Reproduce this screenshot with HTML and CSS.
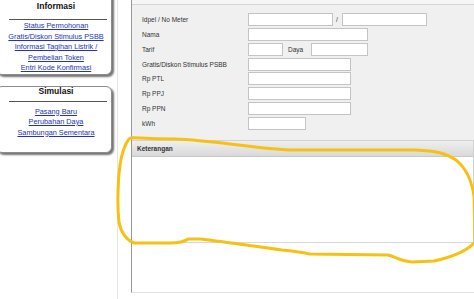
FILE: index.html
```html
<!DOCTYPE html>
<html lang="id">
<head>
    <meta charset="UTF-8">
    <meta name="viewport" content="width=device-width, initial-scale=1.0">
    <title>Informasi Pelanggan</title>
    <link rel="stylesheet" href="styles.css">
</head>
<body>
    <div class="page">
        <div class="sidebar">
            <div class="menu-box menu-info">
                <div class="menu-title">Informasi</div>
                <div class="menu-rule"></div>
                <div class="menu-links">
                    <a href="#">Status Permohonan</a>
                    <a href="#">Gratis/Diskon Stimulus PSBB</a>
                    <a href="#">Informasi Tagihan Listrik /<br>Pembelian Token</a>
                    <a href="#">Entri Kode Konfirmasi</a>
                </div>
            </div>

            <div class="menu-box menu-sim">
                <div class="menu-title">Simulasi</div>
                <div class="menu-rule"></div>
                <div class="menu-links">
                    <a href="#">Pasang Baru</a>
                    <a href="#">Perubahan Daya</a>
                    <a href="#">Sambungan Sementara</a>
                </div>
            </div>
        </div>

        <div class="main">
            <div class="panel">
                <div class="panel-top"></div>

                <div class="form">
                    <label>Idpel / No Meter</label>
                    <div class="field">
                        <input type="text" class="w85">
                        <span class="sep">/</span>
                        <input type="text" class="w85">
                    </div>

                    <label>Nama</label>
                    <div class="field"><input type="text" class="w120"></div>

                    <label>Tarif</label>
                    <div class="field">
                        <input type="text" class="w35">
                        <span class="daya">Daya</span>
                        <input type="text" class="w57">
                    </div>

                    <label>Gratis/Diskon Stimulus PSBB</label>
                    <div class="field"><input type="text" class="w103"></div>

                    <label>Rp PTL</label>
                    <div class="field"><input type="text" class="w103"></div>

                    <label>Rp PPJ</label>
                    <div class="field"><input type="text" class="w103"></div>

                    <label>Rp PPN</label>
                    <div class="field"><input type="text" class="w103"></div>

                    <label>kWh</label>
                    <div class="field"><input type="text" class="w58"></div>
                </div>

                <div class="ket">
                    <div class="ket-head">Keterangan</div>
                    <div class="ket-body"></div>
                </div>
            </div>
        </div>

        <!-- hand drawn marker loop around the Keterangan box -->
        <svg class="marker" width="474" height="299" viewBox="0 0 474 299">
            <path d="M129,139 C132,136 136,139 175,139 C212,140 250,148 290,150 L415,150
                     C436,151 446,153 456,160 C466,168 472,182 474,196 L475,242
                     C468,250 452,257 434,261 L412,262 C401,261 396,257 388,255
                     L310,254 C300,252 292,251 282,250 C250,246 220,241 200,239
                     L188,239 C184,242 180,243 170,243 L134,243
                     C127,240 121,233 119,222 C117,205 118,180 120,165
                     C122,152 125,144 129,139 Z" />
        </svg>
    </div>
</body>
</html>
```

FILE: styles.css
```css
* {
    margin: 0;
    padding: 0;
    box-sizing: border-box;
}

body {
    background-color: #ffffff;
    font-family: 'Liberation Sans', Arial, sans-serif;
    overflow: hidden;
}

.page {
    position: relative;
    display: flex;
    width: 474px;
    height: 299px;
    overflow: hidden;
}

/* sidebar menus */

.sidebar {
    width: 117px;
    flex-shrink: 0;
}

.menu-box {
    width: 116px;
    margin-left: -4px;
    padding-left: 4px;
    background-color: #ffffff;
    border: 1px solid #8c8c8c;
    border-radius: 6px;
    box-shadow: 2px 2px 2px rgba(0, 0, 0, 0.55);
    text-align: center;
}

.menu-info {
    margin-top: -11px;
    padding-top: 10px;
}

.menu-sim {
    margin-top: 11px;
    padding-bottom: 14px;
}

.menu-title {
    font-size: 8.5px;
    font-weight: bold;
    line-height: 12px;
    color: #111111;
}

.menu-info .menu-title {
    margin-bottom: 7px;
}

.menu-sim .menu-title {
    line-height: 9px;
    margin-bottom: 5px;
}

.menu-rule {
    height: 1px;
    margin: 0 4px 0 8px;
    background-color: #555555;
}

.menu-links {
    padding-top: 1px;
    font-size: 7.3px;
    line-height: 10.5px;
}

.menu-sim .menu-links {
    padding-top: 5px;
}

.menu-links a {
    display: block;
    color: #2233bb;
}

/* main panel */

.main {
    flex: 1;
    border-left: 1px solid #e6e6e6;
    padding-left: 13px;
}

.panel {
    height: 293px;
    border-left: 1px solid #999999;
    border-bottom: 1px solid #e2e2e2;
}

.panel-top {
    height: 5px;
    background-color: #f6f6f6;
    border-bottom: 1px solid #d6d6d6;
}

.form {
    display: grid;
    grid-template-columns: 106px auto;
    row-gap: 1.85px;
    align-items: center;
    padding: 8px 0 10px 10px;
    background-color: #f0f0f0;
    font-size: 6.5px;
    color: #333333;
}

.form label {
    line-height: 13px;
}

.field {
    display: flex;
    align-items: center;
    height: 13px;
}

.field input {
    height: 13px;
    border: 1px solid #c4c4c4;
    background-color: #ffffff;
}

.sep {
    width: 9px;
    padding-left: 3px;
}

.daya {
    width: 28px;
    padding-left: 5px;
}

.w35 { width: 35px; }
.w57 { width: 57px; }
.w58 { width: 58px; }
.w85 { width: 85px; }
.w103 { width: 103px; }
.w120 { width: 120px; }

/* keterangan box */

.ket {
    border-top: 1px solid #d2d2d2;
    border-right: 1px solid #d0d0d0;
}

.ket-head {
    height: 16px;
    padding-left: 5px;
    line-height: 16px;
    font-size: 6.5px;
    font-weight: bold;
    color: #333333;
    background: linear-gradient(#efefef, #d9d9d9);
    border-bottom: 1px solid #c8c8c8;
}

.ket-body {
    height: 86px;
    background-color: #ffffff;
    border-bottom: 1px solid #d8d8d8;
}

/* marker annotation */

.marker {
    position: absolute;
    top: 0;
    left: 0;
    pointer-events: none;
}

.marker path {
    fill: none;
    stroke: #f6c114;
    stroke-width: 3;
    stroke-linecap: round;
    stroke-linejoin: round;
}
```
